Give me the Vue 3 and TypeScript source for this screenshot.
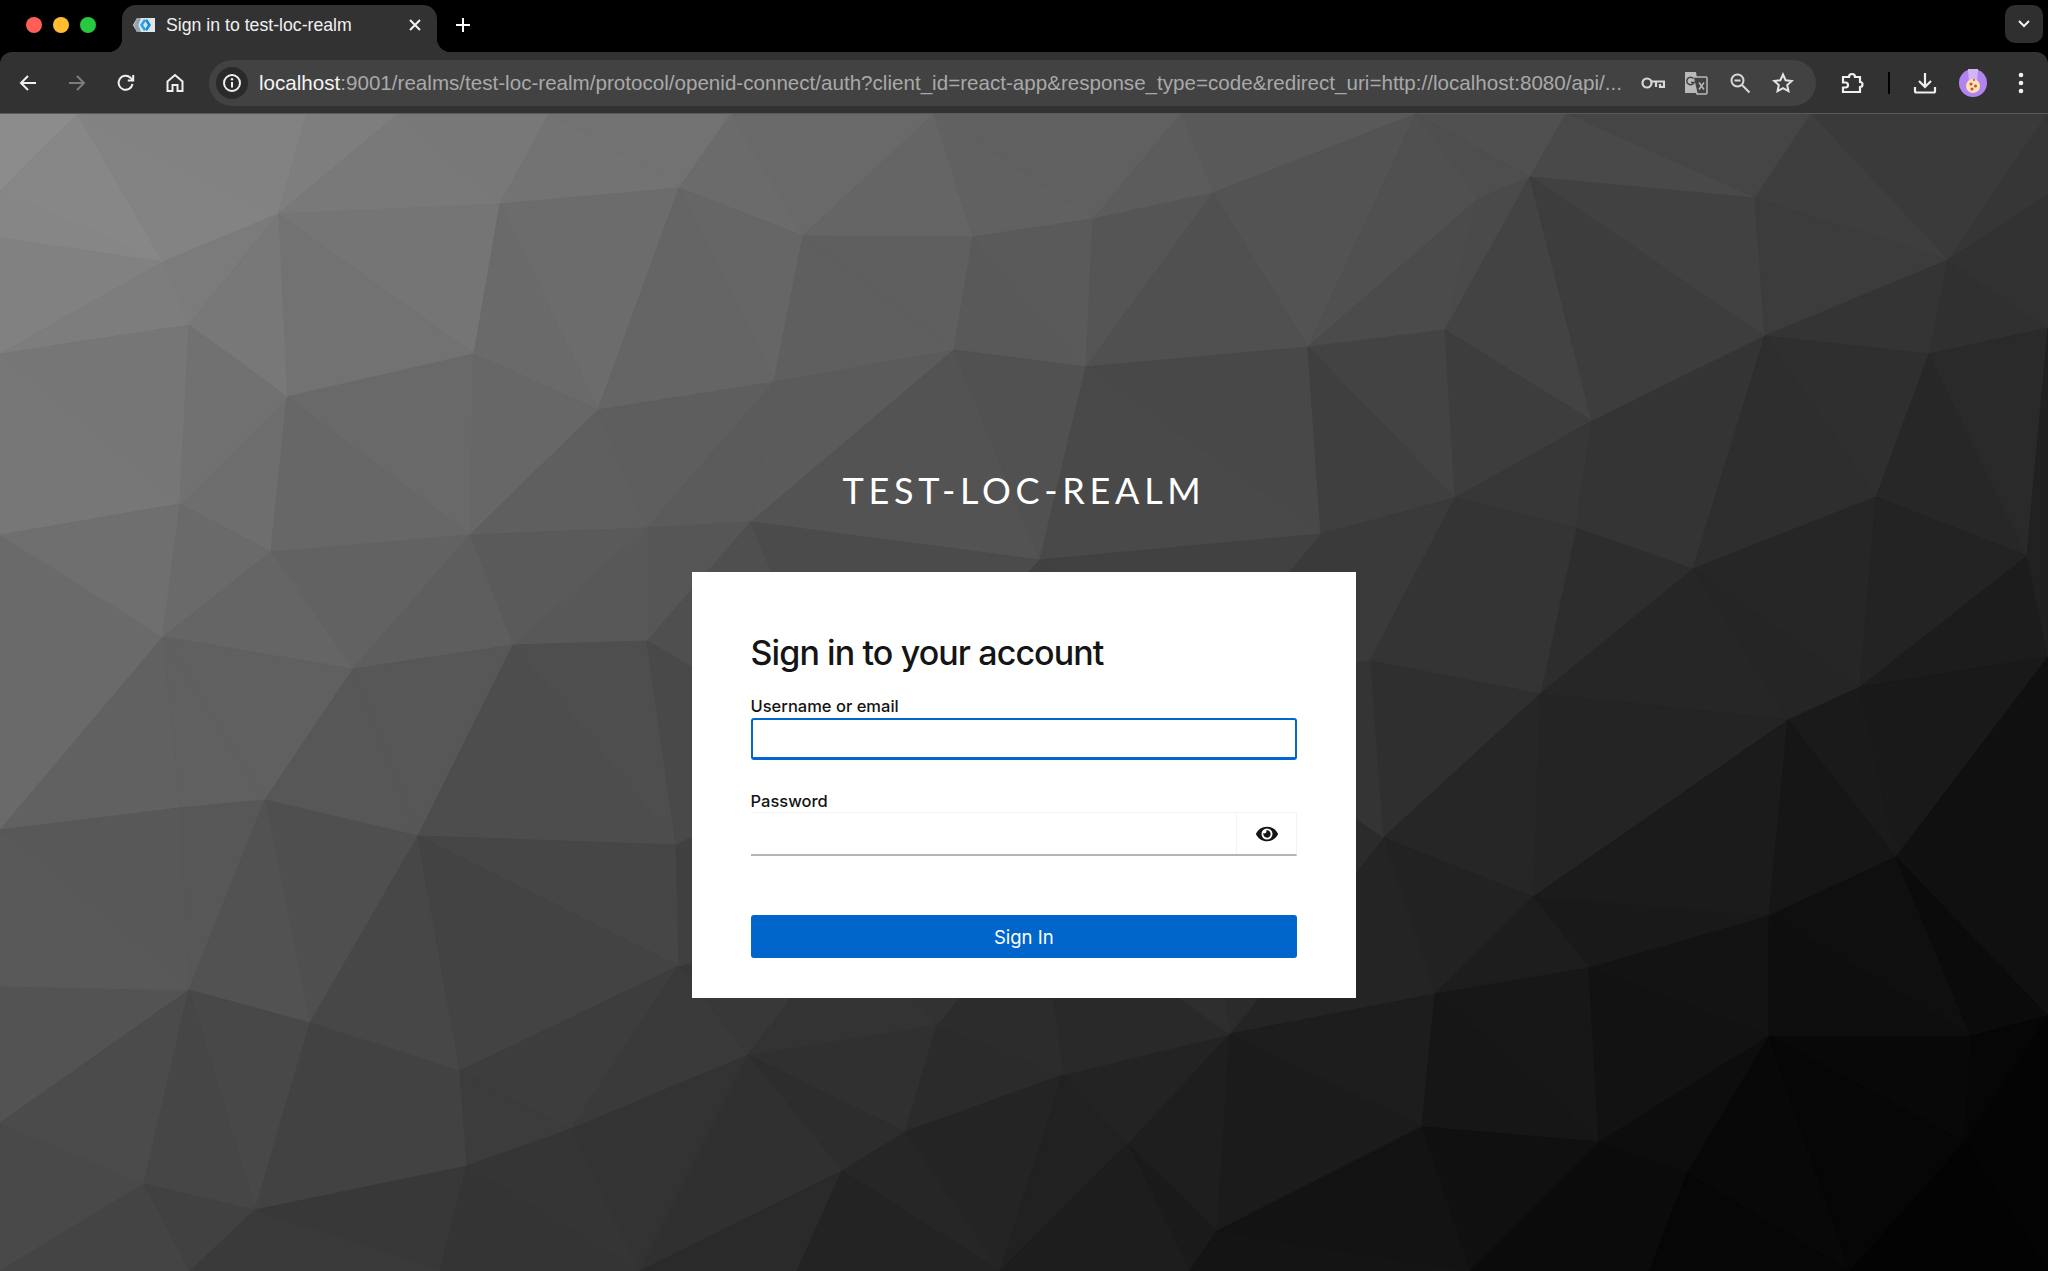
<template>
  <div class="browser">
    <div class="tabstrip">
      <div class="lights">
        <span class="light red"></span>
        <span class="light yellow"></span>
        <span class="light green"></span>
      </div>
      <div class="tab">
        <svg class="favicon" width="24" height="14" viewBox="0 0 24 14">
          <path d="M0 7 4 0h18v14H4z" fill="#dfe6ea" />
          <path d="M4 0h4L5.500 7 8 14H4L1 7z" fill="#8fa3b0" />
          <path d="M11 1 7 7l4 6 2-1.500L10.200 7 13 2.500z" fill="#29a3ec" />
          <path d="M14 1 18 7l-4 6-2-1.500L14.800 7 12 2.500z" fill="#168bdc" />
        </svg>
        <span class="tab-title">Sign in to test-loc-realm</span>
        <svg class="tab-close" width="14" height="14" viewBox="0 0 14 14">
          <path d="M2 2l10 10M12 2 2 12" stroke="#f2f2f2" stroke-width="2" />
        </svg>
      </div>
      <svg class="new-tab" width="16" height="16" viewBox="0 0 16 16">
        <path d="M8 1v14M1 8h14" stroke="#fff" stroke-width="2" />
      </svg>
      <div class="tab-search">
        <svg width="14" height="10" viewBox="0 0 14 10">
          <path d="M2 2l5 5 5-5" fill="none" stroke="#f2f2f2" stroke-width="2" />
        </svg>
      </div>
    </div>

    <div class="toolbar">
      <button class="tool">
        <svg width="20" height="20" viewBox="0 0 20 20" fill="none" stroke="#f0f0f0" stroke-width="2">
          <path d="M18 10H3M10 3l-7 7 7 7" />
        </svg>
      </button>
      <button class="tool">
        <svg width="20" height="20" viewBox="0 0 20 20" fill="none" stroke="#7d7d7d" stroke-width="2">
          <path d="M2 10h15M10 3l7 7-7 7" />
        </svg>
      </button>
      <button class="tool">
        <svg width="20" height="20" viewBox="0 0 20 20" fill="none" stroke="#f0f0f0" stroke-width="2">
          <path d="M16.500 11a7 7 0 1 1-2-6.200L17 7" />
          <path d="M17.200 2v5.400h-5.400" />
        </svg>
      </button>
      <button class="tool">
        <svg width="20" height="20" viewBox="0 0 20 20" fill="none" stroke="#f0f0f0" stroke-width="2">
          <path d="M2.500 8.500 10 2l7.500 6.500V18h-5v-6h-5v6h-5z" />
        </svg>
      </button>

      <div class="omnibox">
        <span class="info">
          <svg width="20" height="20" viewBox="0 0 20 20">
            <circle cx="10" cy="10" r="8" fill="none" stroke="#f0f0f0" stroke-width="2" />
            <path d="M10 9v5.500" stroke="#f0f0f0" stroke-width="2" />
            <circle cx="10" cy="6.300" r="1.200" fill="#f0f0f0" />
          </svg>
        </span>
        <span class="url"><span class="host">localhost</span>{{ urlRest }}</span>
        <span class="omni-icon">
          <svg width="24" height="14" viewBox="0 0 24 14" fill="none" stroke="#d8d8d8" stroke-width="2.200">
            <circle cx="6" cy="7" r="4.500" />
            <path d="M10.500 5.500H23V11h-4V8M15 6v5" />
          </svg>
        </span>
        <span class="omni-icon">
          <svg width="24" height="24" viewBox="0 0 24 24">
            <path d="M1 1h11l3 21H1z" fill="#b9b9b9" />
            <path d="M9 6h13a1 1 0 0 1 1 1v15a1 1 0 0 1-1 1H13z" fill="#424242" stroke="#b9b9b9" stroke-width="1.500" />
            <path d="M9.500 7.500a3.800 3.800 0 1 0 .6 4H7" fill="none" stroke="#424242" stroke-width="1.500" />
            <path d="M15 11.500l5 7M20 11.500l-5 7" stroke="#b9b9b9" stroke-width="1.500" />
          </svg>
        </span>
        <span class="omni-icon">
          <svg width="22" height="22" viewBox="0 0 22 22" fill="none" stroke="#d8d8d8" stroke-width="2">
            <circle cx="8.500" cy="8.500" r="6" />
            <path d="M5.500 8.500h6M13 13l7.500 7.500" />
          </svg>
        </span>
        <span class="omni-icon">
          <svg width="22" height="22" viewBox="0 0 22 22" fill="none" stroke="#e4e4e4" stroke-width="2">
            <path d="M11 2.500l2.600 5.700 6.200.7-4.600 4.200 1.300 6.100L11 16.200l-5.500 3 1.300-6.100L2.200 8.900l6.200-.7z" />
          </svg>
        </span>
      </div>

      <button class="tool wide">
        <svg width="24" height="24" viewBox="0 0 24 24" fill="none" stroke="#f0f0f0" stroke-width="2.200">
          <path d="M3 6h6a3 3 0 0 1 6 0h5v5a2.500 2.500 0 0 1 0 5v5H3v-4.500h2.500a2.300 2.300 0 0 0 0-5H3z" />
        </svg>
      </button>
      <span class="divider"></span>
      <button class="tool wide">
        <svg width="24" height="24" viewBox="0 0 24 24" fill="none" stroke="#f0f0f0" stroke-width="2.200">
          <path d="M12 2v13M6 10l6 6 6-6M2 16v4a1.500 1.500 0 0 0 1.500 1.500h17A1.500 1.500 0 0 0 22 20v-4" />
        </svg>
      </button>
      <button class="tool wide">
        <svg width="28" height="28" viewBox="0 0 28 28">
          <circle cx="14" cy="14" r="14" fill="#b184ef" />
          <path d="M9 0h10l-1 14h-8z" fill="#d2b6f7" />
          <circle cx="14" cy="17" r="7" fill="#fbe3b4" />
          <circle cx="12" cy="15" r="1.500" fill="#d9452f" />
          <circle cx="16.500" cy="17" r="1.500" fill="#d9452f" />
          <circle cx="13" cy="20" r="1.500" fill="#d9452f" />
          <circle cx="15" cy="11" r="1" fill="#d9452f" />
        </svg>
      </button>
      <button class="tool wide">
        <svg width="6" height="22" viewBox="0 0 6 22" fill="#f0f0f0">
          <circle cx="3" cy="3" r="2.300" />
          <circle cx="3" cy="11" r="2.300" />
          <circle cx="3" cy="19" r="2.300" />
        </svg>
      </button>
    </div>

    <main class="page">
      <svg class="backdrop" width="2048" height="1157" viewBox="0 114 2048 1157" preserveAspectRatio="none">
        <polygon
          v-for="(t, i) in facets"
          :key="i"
          :points="t.points"
          :fill="t.fill"
          :stroke="t.fill"
          stroke-width="1"
        />
      </svg>

      <h1 class="realm">TEST-LOC-REALM</h1>

      <form class="card" @submit.prevent>
        <h2 class="card-title">Sign in to your account</h2>

        <label class="label" for="username">Username or email</label>
        <input id="username" class="input focused" type="text" />

        <label class="label second" for="password">Password</label>
        <div class="password">
          <input id="password" class="input plain" type="password" />
          <button class="eye" type="button">
            <svg width="22" height="20" viewBox="0 0 576 512" fill="#151515">
              <path d="M572.520 241.400C518.290 135.590 410.930 64 288 64S57.680 135.640 3.480 241.410a32.350 32.350 0 0 0 0 29.190C57.710 376.410 165.070 448 288 448s230.320-71.640 284.520-177.410a32.350 32.350 0 0 0 0-29.190zM288 400a144 144 0 1 1 144-144 143.930 143.930 0 0 1-144 144zm0-240a95.310 95.310 0 0 0-25.310 3.790 47.850 47.850 0 0 1-66.900 66.900A95.780 95.780 0 1 0 288 160z" />
            </svg>
          </button>
        </div>

        <button class="submit" type="submit">Sign In</button>
      </form>
    </main>
  </div>
</template>

<script setup lang="ts">
import { computed } from 'vue'

type Pt = [number, number]

const urlRest =
  ':9001/realms/test-loc-realm/protocol/openid-connect/auth?client_id=react-app&response_type=code&redirect_uri=http://localhost:8080/api/...'

// vertices of the low-poly backdrop, read off the reference
const vertices: Pt[] = [
  [0, 114], [78, 114], [307, 114], [398, 114], [549, 114], [731, 114], [934, 114], [1181, 114],
  [1416, 114], [1566, 114], [1811, 114], [2048, 114],
  [0, 191], [0, 238], [0, 354], [0, 535], [0, 830], [0, 986], [0, 1123], [0, 1271],
  [278, 214], [500, 204], [679, 188], [803, 236], [973, 237], [163, 262], [474, 354], [287, 397],
  [598, 410], [774, 382], [954, 350], [180, 504], [470, 535], [271, 552], [647, 528], [751, 522],
  [163, 637], [353, 669], [513, 645], [647, 641], [189, 325],
  [1530, 177], [1213, 193], [1478, 199], [1755, 198], [1093, 219], [1948, 260], [1445, 330],
  [1308, 347], [1765, 336], [1929, 354], [1086, 367], [1592, 421], [1455, 498], [1876, 497],
  [1693, 569], [2027, 556], [1321, 534], [1576, 528], [1370, 661], [1860, 687], [2048, 657],
  [2048, 328], [2048, 195],
  [180, 808], [265, 800], [418, 836], [676, 845], [189, 990], [310, 1023], [460, 1071], [679, 966],
  [571, 1129], [748, 1055], [937, 1025], [467, 1166], [255, 1210], [144, 1184], [842, 1171], [905, 1132],
  [1788, 720], [1540, 694], [1383, 838], [1533, 897], [1769, 916], [1896, 857], [1435, 994], [1589, 968],
  [1971, 1036], [1769, 1036], [1230, 1034], [1063, 1075], [1128, 1144], [1422, 1127], [1599, 1142],
  [1687, 1173], [1965, 1142], [1217, 1231], [2048, 1016],
  [190, 1271], [440, 1271], [640, 1271], [797, 1271], [1000, 1271], [1190, 1271], [1470, 1271], [1650, 1271],
  [1850, 1271], [2048, 1271], [1040, 560], [1040, 720], [1040, 900], [1180, 700], [850, 760], [850, 920]
]

function triangulate(pts: Pt[]): [number, number, number][] {
  const all: Pt[] = [...pts, [-10000, -10000], [14000, -10000], [1000, 16000]]
  const n = pts.length
  let tris: [number, number, number][] = [[n, n + 1, n + 2]]

  const inCircle = (t: [number, number, number], p: Pt) => {
    const [a, b, c] = t.map((i) => all[i])
    const ax = a[0] - p[0], ay = a[1] - p[1]
    const bx = b[0] - p[0], by = b[1] - p[1]
    const cx = c[0] - p[0], cy = c[1] - p[1]
    const det =
      (ax * ax + ay * ay) * (bx * cy - cx * by) -
      (bx * bx + by * by) * (ax * cy - cx * ay) +
      (cx * cx + cy * cy) * (ax * by - bx * ay)
    const orient = (b[0] - a[0]) * (c[1] - a[1]) - (b[1] - a[1]) * (c[0] - a[0])
    return orient > 0 ? det > 0 : det < 0
  }

  pts.forEach((p, idx) => {
    const bad = tris.filter((t) => inCircle(t, p))
    const edges = new Map<string, [number, number]>()
    for (const t of bad) {
      for (const [u, v] of [[t[0], t[1]], [t[1], t[2]], [t[2], t[0]]]) {
        const key = u < v ? `${u}-${v}` : `${v}-${u}`
        if (edges.has(key)) edges.delete(key)
        else edges.set(key, [u, v])
      }
    }
    tris = tris.filter((t) => !bad.includes(t))
    edges.forEach(([u, v]) => tris.push([u, v, idx]))
  })

  return tris.filter((t) => t.every((i) => i < n))
}

const facets = computed(() =>
  triangulate(vertices).map(([a, b, c]) => {
    const [p, q, r] = [vertices[a], vertices[b], vertices[c]]
    const x = (p[0] + q[0] + r[0]) / 3
    const y = (p[1] + q[1] + r[1]) / 3
    // diagonal falloff plus a small per-facet shift, eased into black at the far corner
    const seed = Math.sin(x * 12.9898 + y * 78.233) * 43758.5453
    const jitter = (seed - Math.floor(seed) - 0.5) * 3.5
    const base = 142 - 0.041 * x - 0.062 * (y - 114)
    const soft = 8 * Math.log(1 + Math.exp(base / 8))
    const l = Math.max(0, Math.min(255, Math.round(soft + jitter * Math.min(1, soft / 30))))
    return {
      points: `${p[0]},${p[1]} ${q[0]},${q[1]} ${r[0]},${r[1]}`,
      fill: `rgb(${l},${l},${l})`
    }
  })
)
</script>

<style scoped>
.browser {
  width: 2048px;
  height: 1271px;
  display: flex;
  flex-direction: column;
  overflow: hidden;
  background: #000;
  font-family: "Liberation Sans", Arial, sans-serif;
}

.tabstrip {
  height: 52px;
  flex: none;
  display: flex;
  align-items: flex-end;
  background: #000;
}

.lights {
  width: 122px;
  height: 52px;
  flex: none;
  display: flex;
  align-items: center;
  gap: 11px;
  padding: 0 0 2px 26px;
  box-sizing: border-box;
}

.light {
  width: 16px;
  height: 16px;
  border-radius: 50%;
}

.red { background: #ff5f57; }
.yellow { background: #febc2e; }
.green { background: #28c840; }

.tab {
  position: relative;
  width: 315px;
  height: 47px;
  flex: none;
  display: flex;
  align-items: center;
  box-sizing: border-box;
  padding: 0 15px 7px 11px;
  background: #323232;
  border-radius: 14px 14px 0 0;
}

.tab::before,
.tab::after {
  content: "";
  position: absolute;
  bottom: 0;
  width: 14px;
  height: 14px;
}

.tab::before {
  left: -14px;
  background: radial-gradient(circle at 0 0, #000 14px, #323232 14.500px);
}

.tab::after {
  right: -14px;
  background: radial-gradient(circle at 100% 0, #000 14px, #323232 14.500px);
}

.tab-title {
  flex: 1;
  margin-left: 9px;
  color: #f0f0f0;
  font-size: 17.700px;
  white-space: nowrap;
}

.new-tab {
  margin: 0 0 19px 18px;
  flex: none;
}

.tab-search {
  width: 38px;
  height: 38px;
  margin: 0 5px 9px auto;
  flex: none;
  display: flex;
  align-items: center;
  justify-content: center;
  border-radius: 10px;
  background: #2f2f2f;
}

.toolbar {
  height: 62px;
  flex: none;
  display: flex;
  align-items: center;
  box-sizing: border-box;
  padding: 0 3px;
  background: #323232;
  border-radius: 12px 12px 0 0;
  border-bottom: 1px solid #5a5a5a;
  position: relative;
}

.tool {
  width: 49px;
  height: 48px;
  flex: none;
  display: flex;
  align-items: center;
  justify-content: center;
  padding: 0;
  border: 0;
  background: none;
}

.tool.wide {
  width: 48px;
}

.omnibox {
  flex: 1;
  min-width: 0;
  height: 46px;
  margin: 0 12px 0 10px;
  display: flex;
  align-items: center;
  box-sizing: border-box;
  padding: 0 11px 0 7px;
  border-radius: 23px;
  background: #424242;
}

.info {
  width: 32px;
  height: 32px;
  flex: none;
  display: flex;
  align-items: center;
  justify-content: center;
  border-radius: 50%;
  background: #2a2a2a;
}

.url {
  flex: 1;
  min-width: 0;
  margin-left: 11px;
  overflow: hidden;
  white-space: nowrap;
  color: #a9a9a9;
  font-size: 20.600px;
}

.host {
  color: #f4f4f4;
}

.omni-icon {
  width: 43.500px;
  flex: none;
  display: flex;
  align-items: center;
  justify-content: center;
}

.divider {
  width: 2px;
  height: 22px;
  margin: 0 11.500px;
  flex: none;
  background: #000;
}

.page {
  position: relative;
  flex: 1;
  display: flex;
  flex-direction: column;
  align-items: center;
  padding-top: 354px;
  box-sizing: border-box;
  overflow: hidden;
  background: #444;
}

.backdrop {
  position: absolute;
  left: 0;
  top: 0;
}

.realm {
  position: relative;
  margin: 0 0 59px;
  height: 45px;
  line-height: 45px;
  color: #fff;
  font-family: Lato, sans-serif;
  font-size: 36px;
  font-weight: 400;
  letter-spacing: 4.700px;
}

.card {
  position: relative;
  width: 664px;
  height: 426px;
  box-sizing: border-box;
  padding: 59px 59px 0 58.500px;
  display: flex;
  flex-direction: column;
  background: #fff;
  font-family: Inter, sans-serif;
}

.card-title {
  margin: 0 0 21px;
  height: 44px;
  line-height: 44px;
  font-size: 34px;
  font-weight: 500;
  letter-spacing: -0.900px;
  color: #151515;
}

.label {
  height: 20px;
  line-height: 20px;
  font-size: 16.500px;
  font-weight: 500;
  color: #151515;
}

.label.second {
  margin-top: 31px;
}

.input {
  display: block;
  width: 100%;
  box-sizing: border-box;
  outline: none;
  background: #fff;
  border-radius: 0;
}

.focused {
  height: 42px;
  margin-top: 2px;
  border: 2px solid #0066cc;
  border-bottom-width: 3px;
  border-radius: 3px;
}

.password {
  display: flex;
  height: 44px;
  margin-top: 1px;
  box-sizing: border-box;
  border-top: 1px solid #f3f3f3;
  border-right: 1px solid #f3f3f3;
  border-bottom: 2px solid #b4b4b4;
}

.plain {
  flex: 1;
  min-width: 0;
  height: 100%;
  border: 0;
}

.eye {
  width: 60px;
  flex: none;
  display: flex;
  align-items: center;
  justify-content: center;
  padding: 0;
  border: 0;
  border-left: 1px solid #f3f3f3;
  background: #fff;
}

.submit {
  height: 43px;
  margin-top: 59px;
  border: 0;
  border-radius: 3px;
  background: #0066cc;
  color: #fff;
  font-family: Inter, sans-serif;
  font-size: 18.500px;
}
</style>

<style>
html,
body {
  background: #000;
  overflow: hidden;
}
</style>
